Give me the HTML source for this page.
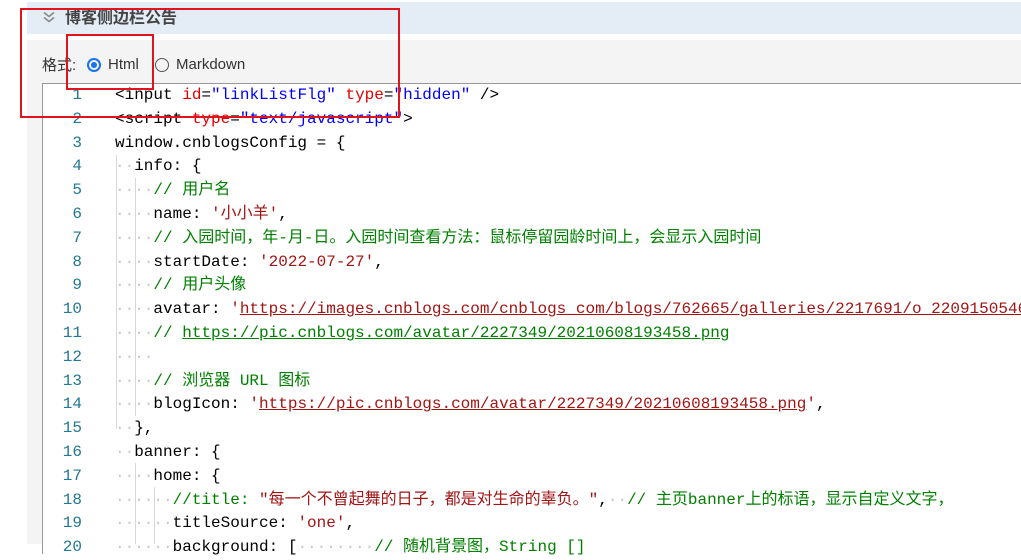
<!DOCTYPE html>
<html><head><meta charset="utf-8"><style>
body{margin:0;width:1021px;height:544px;overflow:hidden;background:#fff;position:relative;font-family:"Liberation Sans","Noto Sans CJK SC",sans-serif}
.hdr{position:absolute;left:27px;top:2px;width:994px;height:32px;background:#e4ecf6}
.hdr .t{position:absolute;left:38px;top:7px;font-size:16px;line-height:20px;font-weight:bold;color:#444}
.gray{position:absolute;left:27px;top:40px;width:994px;height:504px;background:#f4f4f4}
.fmt{position:absolute;left:42px;top:56px;font-size:15px;line-height:18px;color:#333}
.radio{position:absolute;top:58px;width:14px;height:14px;border-radius:50%;box-sizing:border-box}
.ed{position:absolute;left:42px;top:83px;width:990px;height:470px;background:#fff;border-left:1px solid #999;border-top:1px solid #999}
.ln{position:absolute;left:42px;width:40px;text-align:right;font:16px "Liberation Mono",monospace;color:#237893}
.cd{position:absolute;left:115px;font:16px "Liberation Mono","Noto Sans CJK SC",monospace;color:#000;white-space:pre}
.d{color:#c8c8c8}.r{color:#e50000}.b{color:#0000ff}.g{color:#008000}.s{color:#a31515}
.u{text-decoration:underline}
.vg{position:absolute;width:1px;background:#d8d8d8}
.box{position:absolute;border:2px solid #e0141e}
</style></head><body>
<div class="hdr"><svg style="position:absolute;left:16px;top:9px" width="12" height="12" viewBox="0 0 12 12"><path d="M1 1.5L6 5.5L11 1.5M1 6.5L6 10.5L11 6.5" fill="none" stroke="#888" stroke-width="1.6"/></svg><div class="t">博客侧边栏公告</div></div>
<div class="gray"></div>
<div class="fmt" style="top:57px">格式:</div>
<div class="radio" style="left:87px;border:2px solid #1a73e8"><div style="position:absolute;left:2px;top:2px;width:6px;height:6px;border-radius:50%;background:#1a73e8"></div></div>
<div class="fmt" style="left:108px">Html</div>
<div class="radio" style="left:155px;border:1px solid #555"></div>
<div class="fmt" style="left:176px">Markdown</div>
<div class="ed"></div>
<div class="vg" style="left:116px;top:155px;height:274px"></div>
<div class="vg" style="left:135px;top:178px;height:238px"></div>
<div class="vg" style="left:135px;top:463px;height:81px"></div>
<div class="vg" style="left:154px;top:487px;height:57px"></div>
<div id="L"></div>
<div class="box" style="left:20px;top:8px;width:376px;height:106px"></div>
<div class="box" style="left:66px;top:34px;width:84px;height:52px"></div>
<script>
var lines=[
'&lt;input <span class="r">id</span>=<span class="b">"linkListFlg"</span> <span class="r">type</span>=<span class="b">"hidden"</span> /&gt;',
'&lt;script <span class="r">type</span>=<span class="b">"text/javascript"</span>&gt;',
'window.cnblogsConfig = {',
'<span class="d">··</span>info: {',
'<span class="d">····</span><span class="g">// 用户名</span>',
'<span class="d">····</span>name: <span class="s">\'小小羊\'</span>,',
'<span class="d">····</span><span class="g">// 入园时间，年-月-日。入园时间查看方法：鼠标停留园龄时间上，会显示入园时间</span>',
'<span class="d">····</span>startDate: <span class="s">\'2022-07-27\'</span>,',
'<span class="d">····</span><span class="g">// 用户头像</span>',
'<span class="d">····</span>avatar: <span class="s">\'<span class="u">https://images.cnblogs.com/cnblogs_com/blogs/762665/galleries/2217691/o_2209150546</span></span>',
'<span class="d">····</span><span class="g">// <span class="u">https://pic.cnblogs.com/avatar/2227349/20210608193458.png</span></span>',
'<span class="d">····</span>',
'<span class="d">····</span><span class="g">// 浏览器 URL 图标</span>',
'<span class="d">····</span>blogIcon: <span class="s">\'<span class="u">https://pic.cnblogs.com/avatar/2227349/20210608193458.png</span>\'</span>,',
'<span class="d">··</span>},',
'<span class="d">··</span>banner: {',
'<span class="d">····</span>home: {',
'<span class="d">······</span><span class="g">//title: </span><span class="s">"每一个不曾起舞的日子，都是对生命的辜负。"</span>,<span class="d">··</span><span class="g">// 主页banner上的标语，显示自定义文字，</span>',
'<span class="d">······</span>titleSource: <span class="s">\'one\'</span>,',
'<span class="d">······</span>background: [<span class="d">········</span><span class="g">// 随机背景图，String []</span>'
];
var h='';
for(var i=0;i<lines.length;i++){var t=84+i*23.8;
h+='<div class="ln" style="top:'+t+'px;line-height:23.8px">'+(i+1)+'</div><div class="cd" style="top:'+t+'px;line-height:23.8px">'+lines[i]+'</div>';}
document.getElementById('L').innerHTML=h;
</script>
</body></html>
